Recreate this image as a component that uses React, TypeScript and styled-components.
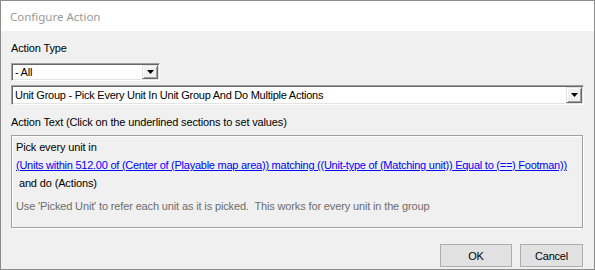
import React from "react";
import styled, { createGlobalStyle } from "styled-components";

const Global = createGlobalStyle`
  html, body { margin: 0; padding: 0; background: #f0f0f0; }
  body { font-family: "Liberation Sans", Arial, sans-serif; font-size: 11px; }
`;

const Window = styled.div`
  box-sizing: border-box;
  width: 595px;
  height: 270px;
  border: 1px solid #8c8c8c;
  display: flex;
  flex-direction: column;
  background: #f0f0f0;
  overflow: hidden;
`;

const TitleBar = styled.div`
  height: 30px;
  flex: none;
  background: #ffffff;
  display: flex;
  align-items: center;
  padding-left: 9px;
  font-family: "Noto Sans", "Open Sans", sans-serif;
  font-size: 11.5px;
  color: #9a9a9a;
`;

const Body = styled.div`
  flex: 1;
  display: flex;
  flex-direction: column;
  padding: 11px 10px 0 10px;
  color: #000;
  font-family: "Liberation Sans", Arial, sans-serif;
  font-size: 11px;
  letter-spacing: -0.14px;
`;

const Label = styled.div<{ $mt?: number }>`
  line-height: 13px;
  height: 13px;
  margin-top: ${(p) => p.$mt ?? 0}px;
  white-space: nowrap;
`;

const Combo = styled.div<{ $width?: number; $height: number; $mt: number }>`
  box-sizing: border-box;
  width: ${(p) => (p.$width ? `${p.$width}px` : "auto")};
  height: ${(p) => p.$height}px;
  margin-top: ${(p) => p.$mt}px;
  background: #ffffff;
  border-top: 1px solid #a0a0a0;
  border-left: 1px solid #a0a0a0;
  border-right: 1px solid #ffffff;
  border-bottom: 1px solid #ffffff;
  box-shadow: inset 1px 1px 0 #696969, inset -1px -1px 0 #e3e3e3;
  display: flex;
  align-items: stretch;
  padding: 1px;
`;

const ComboText = styled.div`
  flex: 1;
  display: flex;
  align-items: center;
  padding-left: 2px;
  white-space: nowrap;
  overflow: hidden;
  letter-spacing: -0.25px;
`;

const DropButton = styled.div`
  box-sizing: border-box;
  width: 16px;
  flex: none;
  background: #f0f0f0;
  border-top: 1px solid #e3e3e3;
  border-left: 1px solid #e3e3e3;
  border-right: 1px solid #696969;
  border-bottom: 1px solid #696969;
  box-shadow: inset 1px 1px 0 #ffffff, inset -1px -1px 0 #a0a0a0;
  display: flex;
  align-items: center;
  justify-content: center;
`;

const GroupBox = styled.div`
  box-sizing: border-box;
  margin-top: 6px;
  height: 93px;
  border: 1px solid #a0a0a0;
  box-shadow: 1px 1px 0 #ffffff, inset 1px 1px 0 #ffffff;
  margin-right: 1px;
  padding: 2px 4px 0 4px;
  display: flex;
  flex-direction: column;
`;

const Line = styled.div<{ $mt?: number }>`
  line-height: 18px;
  height: 18px;
  margin-top: ${(p) => p.$mt ?? 0}px;
  white-space: nowrap;
`;

const Link = styled.span`
  color: #0000ff;
  text-decoration: underline;
  cursor: pointer;
  letter-spacing: -0.25px;
`;

const Hint = styled(Line)`
  color: #6d6d6d;
`;

const ButtonRow = styled.div`
  display: flex;
  justify-content: flex-end;
  gap: 8px;
  margin-top: 16px;
  margin-right: 1px;
`;

const Button = styled.button<{ $width: number }>`
  box-sizing: border-box;
  width: ${(p) => p.$width}px;
  height: 23px;
  background: #e1e1e1;
  border: 1px solid #adadad;
  font-family: "Liberation Sans", Arial, sans-serif;
  font-size: 11px;
  color: #000;
  padding: 0;
  letter-spacing: -0.2px;
`;

const Arrow = () => (
  <svg width="7" height="4" viewBox="0 0 7 4">
    <polygon points="0,0 7,0 3.5,4" fill="#000" />
  </svg>
);

export default function App() {
  return (
    <>
      <Global />
      <Window>
        <TitleBar>Configure Action</TitleBar>
        <Body>
          <Label>Action Type</Label>
          <Combo $width={149} $height={18} $mt={8}>
            <ComboText>- All</ComboText>
            <DropButton>
              <Arrow />
            </DropButton>
          </Combo>
          <Combo $height={20} $mt={4}>
            <ComboText>Unit Group - Pick Every Unit In Unit Group And Do Multiple Actions</ComboText>
            <DropButton>
              <Arrow />
            </DropButton>
          </Combo>
          <Label $mt={11}>Action Text (Click on the underlined sections to set values)</Label>
          <GroupBox>
            <Line>Pick every unit in</Line>
            <Line>
              <Link>
                (Units within 512.00 of (Center of (Playable map area)) matching ((Unit-type of (Matching unit)) Equal to (==) Footman))
              </Link>
            </Line>
            <Line>&nbsp;and do (Actions)</Line>
            <Hint $mt={5}>
              Use 'Picked Unit' to refer each unit as it is picked.&nbsp; This works for every unit in the group
            </Hint>
          </GroupBox>
          <ButtonRow>
            <Button $width={72}>OK</Button>
            <Button $width={63}>Cancel</Button>
          </ButtonRow>
        </Body>
      </Window>
    </>
  );
}
